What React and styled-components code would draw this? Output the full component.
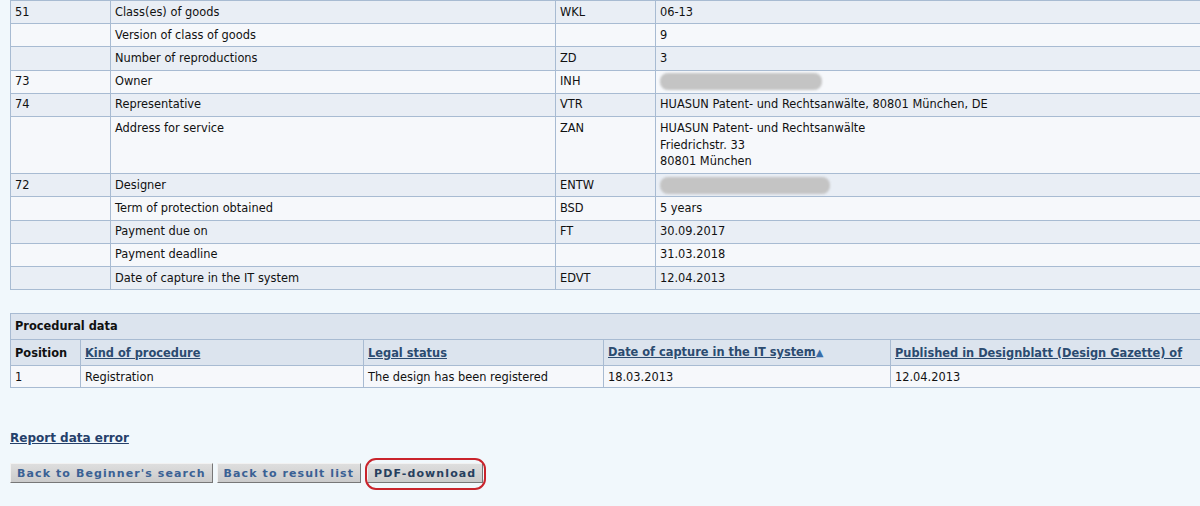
import React from 'react';
import styled, { createGlobalStyle } from 'styled-components';

/** Global styles. */

const GlobalStyle = createGlobalStyle`
	html {
		overflow: hidden;
	}
	html, body {
		margin: 0;
		padding: 0;
		background: #f1f8fc;
	}
	body {
		font-family: 'DejaVu Sans', Verdana, sans-serif;
		font-size: 11.4px;
		color: #111;
	}
`;

/** Module styles. */

const Page = styled.div`
	padding: 0 0 30px 10px;
	width: 1200px;
`;

const DataTable = styled.table`
	border-collapse: collapse;
	width: 1200px;
	table-layout: fixed;
`;

const Row = styled.tr`
	background-color: ${props => (props.shade ? '#e9eef5' : '#f6f8fb')};
`;

const Cell = styled.td`
	border: 1px solid #a8bbd2;
	padding: 2.65px 4px;
	line-height: 16.9px;
	vertical-align: top;
	white-space: nowrap;
`;

const Redacted = styled.span`
	display: inline-block;
	width: ${props => props.w}px;
	height: 17px;
	border-radius: 8px;
	background: #c4c4c4;
	vertical-align: top;
	filter: blur(1px);
`;

const ProcTable = styled.table`
	border-collapse: collapse;
	width: 1200px;
	table-layout: fixed;
	margin-top: 23px;
`;

const Caption = styled.td`
	border: 1px solid #a8bbd2;
	background-color: #dce4ee;
	font-weight: bold;
	padding: 4px 4px 4px 4px;
	line-height: 17px;
`;

const HeadCell = styled.th`
	border: 1px solid #a8bbd2;
	background-color: #dce4ee;
	text-align: left;
	font-weight: bold;
	padding: 4px 4px;
	line-height: 16px;
	white-space: nowrap;
	overflow: hidden;
`;

const HeadLink = styled.a`
	color: #2b4b70;
	text-decoration: underline;
`;

const Arrow = styled.span`
	color: #3a6ea8;
	font-size: 10px;
`;

const ProcCell = styled.td`
	border: 1px solid #a8bbd2;
	background-color: #f6f8fb;
	padding: 3px 4px 2px;
	line-height: 16px;
	white-space: nowrap;
`;

const Footer = styled.div`
	display: flex;
	flex-direction: column;
	align-items: flex-start;
	gap: 17px;
	padding-top: 42px;
`;

const ReportLink = styled.a`
	font-weight: bold;
	font-size: 12px;
	line-height: 16px;
	color: #25406a;
	text-decoration: underline;
`;

const ButtonBar = styled.div`
	display: flex;
	align-items: center;
	gap: 4px;
`;

const Button = styled.button`
	font-family: 'DejaVu Sans', Verdana, sans-serif;
	font-size: 11px;
	font-weight: bold;
	letter-spacing: 1.1px;
	color: ${props => (props.dark ? '#273f5e' : '#3a6194')};
	background: linear-gradient(#dedede, #cbcbcb);
	border: 1px solid;
	border-color: #f2f2f2 #777 #777 #f2f2f2;
	padding: 2px 6px 2px 6px;
	height: 20px;
	margin-right: ${props => props.spaced || 0}px;
	cursor: pointer;
`;

const Highlight = styled.span`
	position: relative;
	display: inline-flex;

	&::after {
		content: '';
		position: absolute;
		left: -2px;
		right: -3px;
		top: -5px;
		bottom: -7px;
		border: 2px solid #c9242c;
		border-radius: 11px;
		pointer-events: none;
	}
`;

const rows = [
	['51', 'Class(es) of goods', 'WKL', '06-13'],
	['', 'Version of class of goods', '', '9'],
	['', 'Number of reproductions', 'ZD', '3'],
	['73', 'Owner', 'INH', { blur: 162 }],
	['74', 'Representative', 'VTR', 'HUASUN Patent- und Rechtsanwälte, 80801 München, DE'],
	['', 'Address for service', 'ZAN', ['HUASUN Patent- und Rechtsanwälte', 'Friedrichstr. 33', '80801 München']],
	['72', 'Designer', 'ENTW', { blur: 170 }],
	['', 'Term of protection obtained', 'BSD', '5 years'],
	['', 'Payment due on', 'FT', '30.09.2017'],
	['', 'Payment deadline', '', '31.03.2018'],
	['', 'Date of capture in the IT system', 'EDVT', '12.04.2013'],
];

function renderValue(value) {
	if (Array.isArray(value)) {
		return value.map((line, i) => <div key={i}>{line}</div>);
	}
	if (value && value.blur) {
		return <Redacted w={value.blur} />;
	}
	return value;
}

/* Function `App` page. */

function App() {
	return (
		<Page>
			<GlobalStyle />
			<DataTable>
				<colgroup>
					<col style={{ width: 100 }} />
					<col style={{ width: 445 }} />
					<col style={{ width: 100 }} />
					<col />
				</colgroup>
				<tbody>
					{rows.map((row, i) => (
						<Row key={i} shade={i % 2 === 0}>
							<Cell>{row[0]}</Cell>
							<Cell>{row[1]}</Cell>
							<Cell>{row[2]}</Cell>
							<Cell>{renderValue(row[3])}</Cell>
						</Row>
					))}
				</tbody>
			</DataTable>

			<ProcTable>
				<colgroup>
					<col style={{ width: 70 }} />
					<col style={{ width: 283 }} />
					<col style={{ width: 240 }} />
					<col style={{ width: 287 }} />
					<col />
				</colgroup>
				<tbody>
					<tr>
						<Caption colSpan={5}>Procedural data</Caption>
					</tr>
					<tr>
						<HeadCell>Position</HeadCell>
						<HeadCell><HeadLink>Kind of procedure</HeadLink></HeadCell>
						<HeadCell><HeadLink>Legal status</HeadLink></HeadCell>
						<HeadCell>
							<HeadLink>Date of capture in the IT system</HeadLink>
							<Arrow>▲</Arrow>
						</HeadCell>
						<HeadCell><HeadLink>Published in Designblatt (Design Gazette) of</HeadLink></HeadCell>
					</tr>
					<tr>
						<ProcCell>1</ProcCell>
						<ProcCell>Registration</ProcCell>
						<ProcCell>The design has been registered</ProcCell>
						<ProcCell>18.03.2013</ProcCell>
						<ProcCell>12.04.2013</ProcCell>
					</tr>
				</tbody>
			</ProcTable>

			<Footer>
				<ReportLink>Report data error</ReportLink>
				<ButtonBar>
					<Button>Back to Beginner's search</Button>
					<Button spaced={2}>Back to result list</Button>
					<Highlight>
						<Button dark>PDF-download</Button>
					</Highlight>
				</ButtonBar>
			</Footer>
		</Page>
	);
}

export default App;
